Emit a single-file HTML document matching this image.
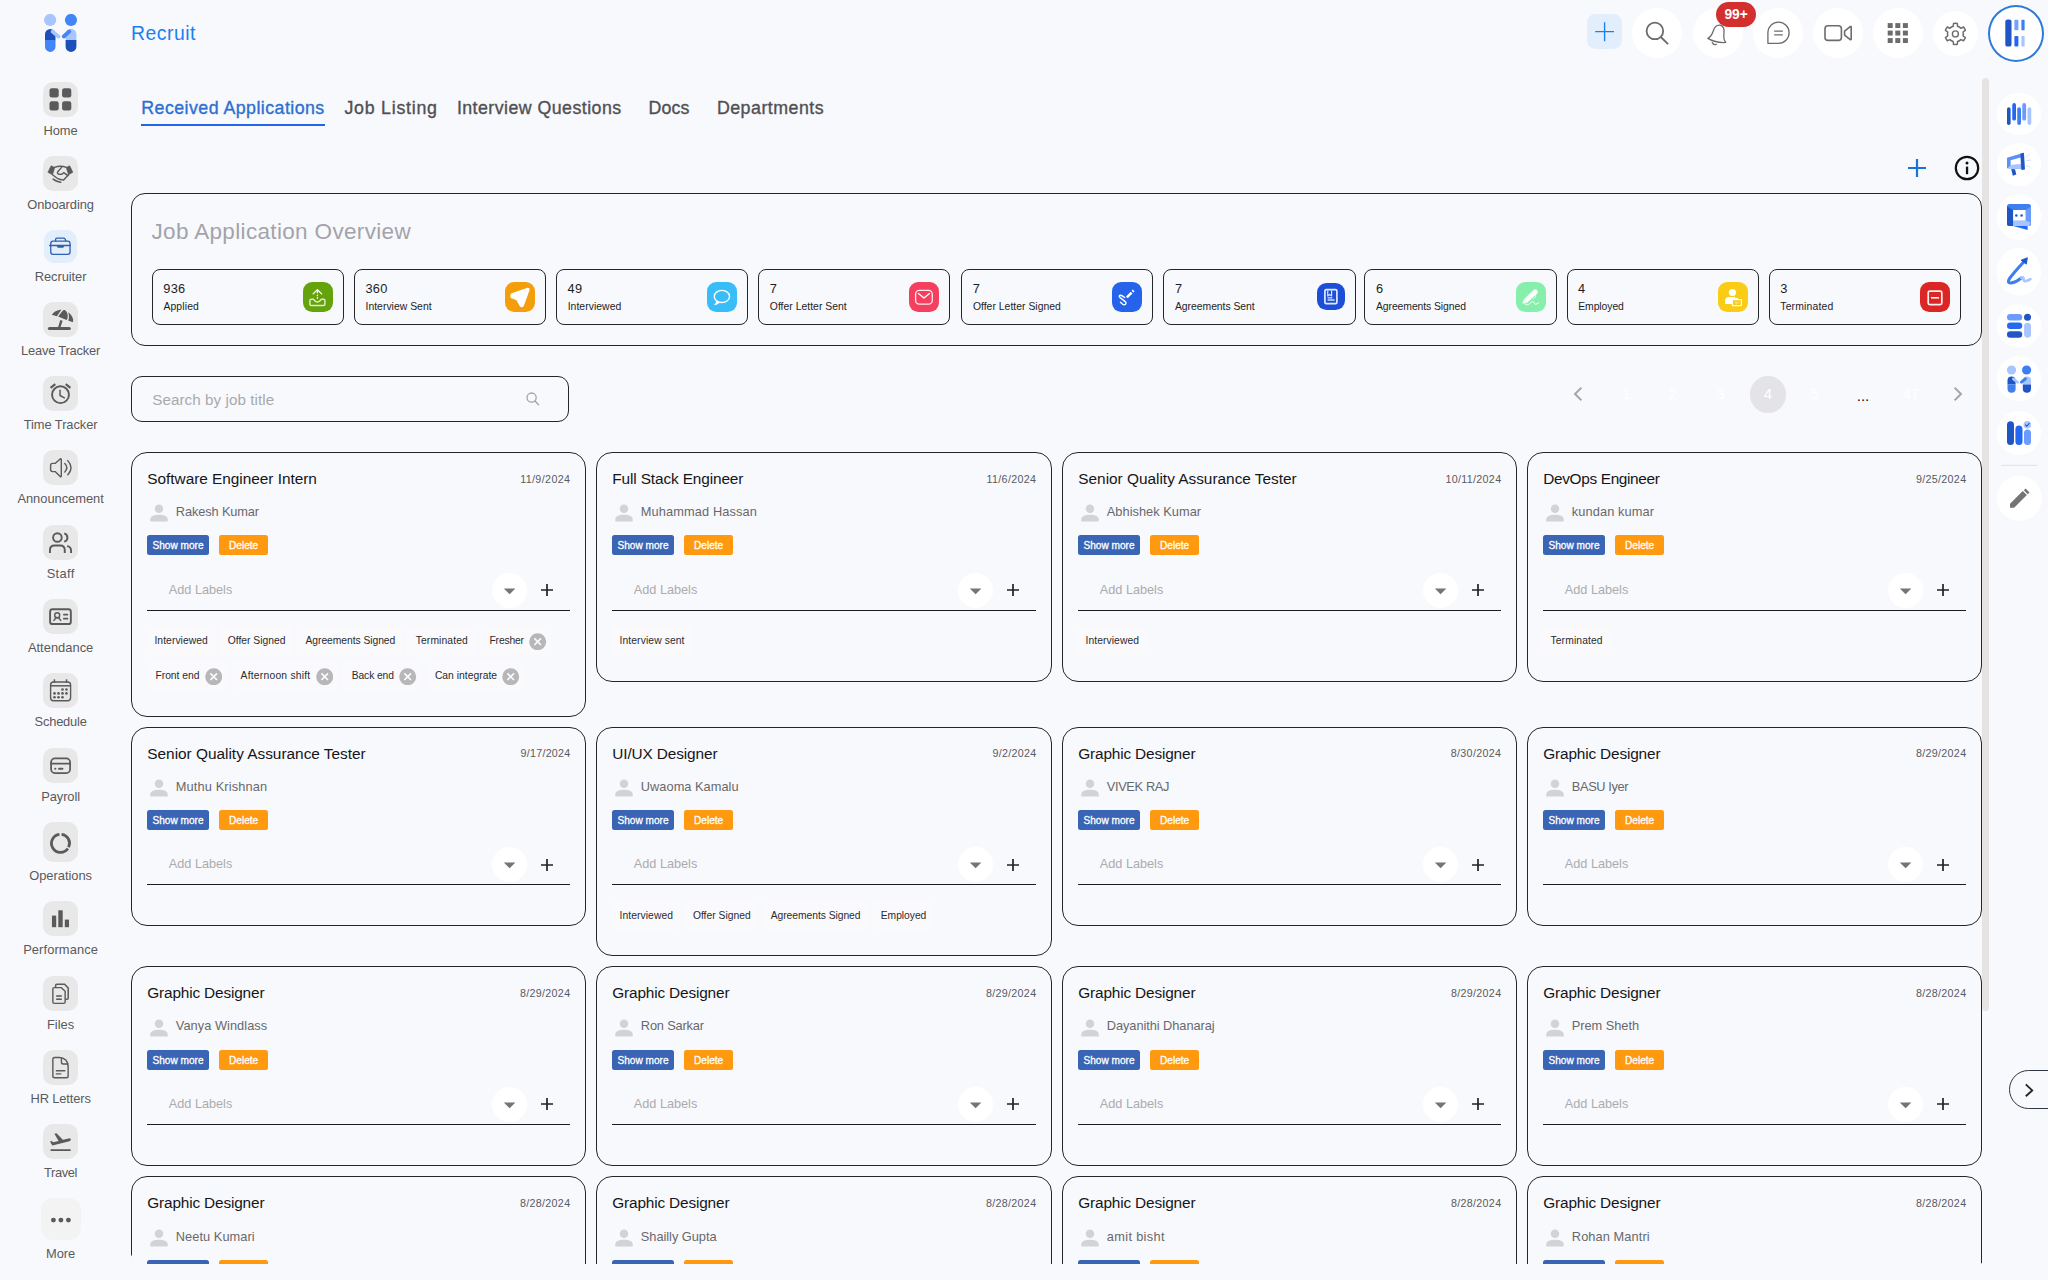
<!DOCTYPE html>
<html lang="en"><head><meta charset="utf-8"><title>Recruit</title><style>
*{box-sizing:border-box;margin:0;padding:0}
html,body{width:2048px;height:1280px;overflow:hidden;background:#f8f9fc;font-family:"Liberation Sans",Arial,sans-serif;color:#1d1d1f}
.abs{position:absolute}
div{white-space:nowrap}
#side .bx{position:absolute;left:43px;width:35px;height:35px;border-radius:10px;background:#e8e8e9}
#side .lb{position:absolute;left:0;width:121.2px;text-align:center;font-size:12.9px;color:#5a5a5d;line-height:16px}
.tab{position:absolute;top:96px;font-size:17.8px;line-height:24px;color:#505054;-webkit-text-stroke:0.35px #505054}
.tab.on{color:#2d6fd2;-webkit-text-stroke:0.35px #2d6fd2}
.circ{position:absolute;border-radius:50%;background:#fff}
.ov{position:absolute;left:131px;top:193px;width:1851px;height:152.5px;border:1px solid #26262a;border-radius:14px}
.st{position:absolute;top:269px;width:192.3px;height:55.8px;border:1px solid #26262a;border-radius:8px}
.st .n{position:absolute;left:10.6px;top:11.1px;font-size:12.8px;line-height:15px;color:#1d1d1f;letter-spacing:0.3px}
.st .l{position:absolute;left:10.7px;top:30.2px;font-size:10.4px;line-height:13px;color:#1d1d1f}
.st .ic{position:absolute;left:150.3px;top:11.8px;width:30px;height:30px;border-radius:9.2px}
.card{position:absolute;width:455px;border:1px solid #26262a;border-radius:16px}
.card .t{position:absolute;left:15.3px;top:16px;font-size:15.4px;line-height:20px;color:#151518}
.card .d{position:absolute;right:14.6px;top:19.9px;font-size:10.7px;line-height:13px;color:#5a5a5e}
.card .av{position:absolute;left:17.4px;top:50px;width:20px;height:20px}
.card .nm{position:absolute;left:43.8px;top:50.5px;font-size:12.8px;line-height:16px;color:#68686c}
.card .b1{position:absolute;left:15px;top:82px;width:62px;height:20px;border-radius:2.5px;background:#3a64b4;color:#fff;font-size:10.1px;line-height:21.6px;text-align:center;-webkit-text-stroke:0.3px #fff}
.card .b2{position:absolute;left:87px;top:82px;width:49.2px;height:20px;border-radius:2.5px;background:#ff990f;color:#fff;font-size:10.1px;line-height:21.6px;text-align:center;-webkit-text-stroke:0.3px #fff}
.card .al{position:absolute;left:36.8px;top:128.5px;font-size:12.7px;line-height:16px;color:#ababaf}
.card .dd{position:absolute;right:58px;top:120px;width:35px;height:35px;border-radius:50%;background:#fff}
.card .pl{position:absolute;right:31.3px;top:130px;width:14px;height:14px}
.card .ul{position:absolute;left:15px;right:15px;top:157px;height:1.2px;background:#1d1d1f}
.chip{position:absolute;height:29px;border-radius:3px;background:#fafafd;font-size:10.3px;line-height:30px;color:#2a2a2e;padding-left:8.4px}
.chip .x{position:absolute;right:4.2px;top:6.3px;width:17.4px;height:17.4px}
.pg{position:absolute;top:382px;width:40px;text-align:center;font-size:15px;line-height:24px;color:#fff}
</style></head><body>
<div id="side">
<div class="abs" style="left:44px;top:14px;width:34px;height:40px"><svg width="34" height="40" viewBox="0 0 34 40" style="position:absolute;left:0;top:0;">
<circle cx="6.15" cy="6" r="6.1" fill="#a9c5ff"/>
<circle cx="26.95" cy="6" r="6.1" fill="#4285f8"/>
<path d="M1 26.3 V20.2 A5.25 5.25 0 0 1 11.5 20.2 V26.3 Z" fill="#1d4fb8"/>
<path d="M1 26.1 H11.5 V32.65 A5.25 5.25 0 0 1 1 32.65 Z" fill="#4285f8"/>
<path d="M21.6 26.3 V20.2 A5.4 5.4 0 0 1 32.4 20.2 V26.3 Z" fill="#a9c5ff"/>
<path d="M21.6 26.1 H32.4 V32.5 A5.4 5.4 0 0 1 21.6 32.5 Z" fill="#1d4fb8"/>
<path d="M8.6 17.6 L14.6 22.6" stroke="#a9c5ff" stroke-width="3.8" stroke-linecap="round"/>
<path d="M25.2 17.6 L19.8 22.4" stroke="#4285f8" stroke-width="4" stroke-linecap="round"/>
</svg></div>
<div class="bx" style="top:82px;height:35px"><svg width="35" height="35" viewBox="0 0 35 35" style="position:absolute;left:0;top:0;"><g fill="#5a5a5a"><rect x="6.5" y="6.3" width="9.2" height="9.3" rx="2.3"/><rect x="19.1" y="6.3" width="9.2" height="9.3" rx="2.3"/><rect x="6.5" y="19.2" width="9.2" height="9.3" rx="2.3"/><rect x="19.1" y="19.2" width="9.2" height="9.3" rx="2.3"/></g></svg></div>
<div class="lb" style="top:123px;letter-spacing:-0.08px">Home</div>
<div class="bx" style="top:156px;height:35px"><svg width="35" height="35" viewBox="0 0 35 35" style="position:absolute;left:0;top:0;"><g fill="#5a5a5a" stroke="#5a5a5a" stroke-width="0.6" stroke-linejoin="round">
<path d="M4.9 16.3 L8.1 9.8 L11.8 11.4 L9.5 18.8 Z"/>
<path d="M29.9 16.3 L26.7 9.8 L23.2 11.4 L25.5 18.8 Z"/></g>
<g fill="none" stroke="#5a5a5a" stroke-width="1.4" stroke-linecap="round" stroke-linejoin="round">
<path d="M11.6 11.4 Q17.4 9.2 23.4 11.4"/>
<path d="M18.6 11.4 L14.7 15.8 Q13.8 17.2 15.4 18 Q17.6 19 19.6 17.6 L20.7 16.7 L24.9 19.6"/>
<path d="M9.5 18.8 L14.2 22.3 Q17.4 23.6 20.6 24.1 L25.5 18.8"/>
<path d="M10.2 23.2 Q12.4 25.2 17.6 26.3" stroke-width="1.6"/>
</g></svg></div>
<div class="lb" style="top:197px;letter-spacing:-0.08px">Onboarding</div>
<div class="bx" style="top:230px;height:33px;left:44px;width:33px;background:#e3eefc"><svg width="33" height="33" viewBox="0 0 33 33" style="position:absolute;left:0;top:0;"><g fill="none" stroke="#2f5fb0" stroke-width="1.3" stroke-linejoin="round" stroke-linecap="round">
<rect x="6.75" y="11.1" width="19.3" height="13.2" rx="2.3"/>
<path d="M11.6 10.9 V9.6 Q11.6 8.1 13.1 8.1 H19.6 Q20.6 8.1 21.2 9.2 L21.9 10.9"/>
<path d="M5.6 15.5 H26.4"/>
</g><path d="M12.6 15.5 H20.4 L19.6 17.2 Q19.4 17.8 18.6 17.8 H14.4 Q13.6 17.8 13.4 17.2 Z" fill="#2f5fb0"/></svg></div>
<div class="lb" style="top:269px;letter-spacing:-0.08px">Recruiter</div>
<div class="bx" style="top:302px;height:35px"><svg width="35" height="35" viewBox="0 0 35 35" style="position:absolute;left:0;top:0;"><g fill="#5a5a5a">
<path d="M8.8 12.65 Q10.4 10.4 12.5 9.3 Q15.2 7.8 18.45 7.4 L13.9 14.2 Z"/>
<path d="M15.1 14.6 L19.9 8.4 Q20.8 7.9 21.6 8.1 Q22.9 8.7 23.7 10 Q25 12.2 24.8 14.9 Q24.5 16.8 23.55 18.1 Z"/>
<path d="M25.1 10.2 Q26.8 11.2 27.9 12.8 Q29.4 14.6 30.05 17 Q30.3 18.6 29.9 20.2 L25.1 18.45 Q26 17 26 14.9 Q26 12.2 25.1 10.2 Z"/>
</g>
<path d="M18.45 18.3 L16.2 25.5" stroke="#5a5a5a" stroke-width="2.4"/>
<path d="M6.4 26.6 H26.3" stroke="#5a5a5a" stroke-width="3" stroke-linecap="round"/></svg></div>
<div class="lb" style="top:343px;letter-spacing:-0.21px">Leave Tracker</div>
<div class="bx" style="top:376px;height:35px"><svg width="35" height="35" viewBox="0 0 35 35" style="position:absolute;left:0;top:0;"><g fill="none" stroke="#5a5a5a" stroke-linejoin="round">
<circle cx="17.5" cy="18.7" r="8.45" stroke-width="1.9"/>
<path d="M17.05 13.7 V19.5 L21.8 22.1" stroke-width="1.5"/>
<path d="M7.55 11.8 L12.3 8.1" stroke-width="2.1"/>
<path d="M27.4 11.8 L22.7 8.1" stroke-width="2.1"/>
</g></svg></div>
<div class="lb" style="top:417px;letter-spacing:-0.09px">Time Tracker</div>
<div class="bx" style="top:450px;height:35px"><svg width="35" height="35" viewBox="0 0 35 35" style="position:absolute;left:0;top:0;"><g fill="none" stroke="#5a5a5a" stroke-width="1.4" stroke-linecap="round" stroke-linejoin="round">
<path d="M9.6 13.4 H12.1 L17.2 8.9 Q18.3 8.3 18.3 9.6 V25.9 Q18.3 27.2 17.2 26.6 L12.1 21.6 H9.6 Q7.6 21.6 7.6 19.6 V15.4 Q7.6 13.4 9.6 13.4 Z"/>
<path d="M21.8 13.6 Q25.8 17.6 21.8 21.9"/>
<path d="M24.8 10.6 Q31.2 17.6 24.8 24.7"/>
</g></svg></div>
<div class="lb" style="top:491px;letter-spacing:-0.03px">Announcement</div>
<div class="bx" style="top:525px;height:35px"><svg width="35" height="35" viewBox="0 0 35 35" style="position:absolute;left:0;top:0;"><g fill="none" stroke="#5a5a5a" stroke-width="1.9" stroke-linecap="butt" stroke-linejoin="round">
<circle cx="14.4" cy="12.5" r="4.3"/>
<path d="M6.95 28.1 V25 Q6.95 20.45 11.5 20.45 H17.2 Q21.75 20.45 21.75 25 V28.1"/>
<path d="M21.2 8.3 A4.35 4.35 0 0 1 21.2 16.7"/>
<path d="M24.1 21.1 Q28.05 21.6 28.05 25.6 V28.1"/>
</g></svg></div>
<div class="lb" style="top:566px;letter-spacing:0.33px">Staff</div>
<div class="bx" style="top:599px;height:35px"><svg width="35" height="35" viewBox="0 0 35 35" style="position:absolute;left:0;top:0;"><g fill="none" stroke="#5a5a5a" stroke-linecap="round" stroke-linejoin="round">
<rect x="7.1" y="10.3" width="20.75" height="14.75" rx="2.4" stroke-width="1.9"/>
<circle cx="14.2" cy="16.3" r="2.5" stroke-width="1.4"/>
<path d="M10.9 21.4 L13 18.7 H15.6 L17.75 21.4" stroke-width="1.5"/>
<path d="M20.9 15.6 H24.4" stroke-width="1.8"/><path d="M20.9 19.7 H24.4" stroke-width="1.8"/>
</g></svg></div>
<div class="lb" style="top:640px;letter-spacing:0.02px">Attendance</div>
<div class="bx" style="top:673px;height:35px"><svg width="35" height="35" viewBox="0 0 35 35" style="position:absolute;left:0;top:0;"><g fill="none" stroke="#5a5a5a" stroke-width="1.4" stroke-linejoin="round">
<rect x="7.6" y="9" width="20" height="18.8" rx="3"/>
<path d="M7.6 12.8 H27.6" stroke-width="1.5"/>
<path d="M11.4 6.3 V9.7" stroke-width="1.5"/><path d="M23.55 6.3 V9.7" stroke-width="1.5"/>
</g><circle cx="19.5" cy="16.5" r="1.3" fill="#5a5a5a"/><circle cx="23.45" cy="16.5" r="1.3" fill="#5a5a5a"/><circle cx="11.5" cy="20.4" r="1.3" fill="#5a5a5a"/><circle cx="15.5" cy="20.4" r="1.3" fill="#5a5a5a"/><circle cx="19.5" cy="20.4" r="1.3" fill="#5a5a5a"/><circle cx="23.45" cy="20.4" r="1.3" fill="#5a5a5a"/><circle cx="11.5" cy="24.25" r="1.3" fill="#5a5a5a"/><circle cx="15.5" cy="24.25" r="1.3" fill="#5a5a5a"/><circle cx="19.5" cy="24.25" r="1.3" fill="#5a5a5a"/></svg></div>
<div class="lb" style="top:714px;letter-spacing:-0.20px">Schedule</div>
<div class="bx" style="top:748px;height:35px"><svg width="35" height="35" viewBox="0 0 35 35" style="position:absolute;left:0;top:0;"><g fill="none" stroke="#5a5a5a" stroke-linecap="round" stroke-linejoin="round">
<rect x="8.1" y="10.4" width="19" height="14.7" rx="3.8" stroke-width="1.75"/>
<path d="M8.1 15.65 H27.1" stroke-width="1.9"/>
<path d="M12.3 20.75 H12.35" stroke-width="2.1"/><path d="M16 20.75 H19.5" stroke-width="1.9"/>
</g></svg></div>
<div class="lb" style="top:789px;letter-spacing:-0.09px">Payroll</div>
<div class="bx" style="top:822px;height:40px"><svg width="35" height="40" viewBox="0 0 35 40" style="position:absolute;left:0;top:0;"><g fill="none" stroke="#5a5a5a" stroke-width="2.8"><path d="M18.60 12.37 A9 9 0 0 1 25.59 25.25"/><path d="M24.87 26.46 A9 9 0 1 1 16.40 12.37"/></g></svg></div>
<div class="lb" style="top:868px;letter-spacing:-0.03px">Operations</div>
<div class="bx" style="top:901px;height:35px"><svg width="35" height="35" viewBox="0 0 35 35" style="position:absolute;left:0;top:0;"><g fill="#5a5a5a"><rect x="8.95" y="14.6" width="4.25" height="11.6"/><rect x="15.3" y="9.3" width="4.4" height="16.9"/><rect x="21.8" y="18.6" width="4.2" height="7.6"/></g></svg></div>
<div class="lb" style="top:942px;letter-spacing:0.10px">Performance</div>
<div class="bx" style="top:976px;height:35px"><svg width="35" height="35" viewBox="0 0 35 35" style="position:absolute;left:0;top:0;"><g fill="none" stroke="#5a5a5a" stroke-width="1.4" stroke-linejoin="round">
<path d="M9.85 13 Q9.85 11.6 11.2 11.6 H18.1 L22.15 15.3 V26 Q22.15 27.4 20.8 27.4 H11.2 Q9.85 27.4 9.85 26 Z"/>
<path d="M12.6 11.4 V9.6 Q12.6 8.3 13.9 8.3 H21.6 L25.2 12.1 V22 Q25.2 23.3 23.9 23.3 H22.4" stroke-width="1.5"/>
<path d="M13.2 20 H18.8" stroke-width="1.6"/><path d="M13.2 23.2 H18.8" stroke-width="1.6"/>
</g></svg></div>
<div class="lb" style="top:1017px;letter-spacing:0.04px">Files</div>
<div class="bx" style="top:1050px;height:35px"><svg width="35" height="35" viewBox="0 0 35 35" style="position:absolute;left:0;top:0;"><g fill="none" stroke="#5a5a5a" stroke-width="1.4" stroke-linecap="round" stroke-linejoin="round">
<path d="M9.85 9.4 Q9.85 7.55 11.7 7.55 H16.6 Q25.15 8.2 25.15 17 V26 Q25.15 27.8 23.3 27.8 H11.7 Q9.85 27.8 9.85 26 Z"/>
<path d="M18.45 8.3 V12.2 Q18.45 14 20.3 14 H24.4"/>
<path d="M13.35 20.75 H21.8"/><path d="M13.35 23.9 H17.75"/>
</g></svg></div>
<div class="lb" style="top:1091px;letter-spacing:-0.14px">HR Letters</div>
<div class="bx" style="top:1124px;height:35px"><svg width="35" height="35" viewBox="0 0 35 35" style="position:absolute;left:0;top:0;"><path d="M7 17.6 L8.6 16.9 L10.2 18.3 L15.6 17.05 L11.4 9.7 L13.5 9.3 L19.85 15.8 L25.8 14.4 Q27.4 14.2 27.8 15.1 Q28.1 16 27.4 16.6 L26.5 17.2 L9.3 21.4 Z" fill="#5a5a5a"/>
<path d="M8.3 26.1 H26.9" stroke="#5a5a5a" stroke-width="1.95" stroke-linecap="round"/></svg></div>
<div class="lb" style="top:1165px;letter-spacing:-0.39px">Travel</div>
<div class="bx" style="top:1198px;left:41px;width:40px;height:42px;border-radius:12px;background:#f3f3f3"><svg width="40" height="42" viewBox="0 0 40 42" style="position:absolute;left:0;top:0;"><g fill="#5a5a5a"><circle cx="12.4" cy="22.1" r="2.45"/><circle cx="19.9" cy="22.1" r="2.45"/><circle cx="27.4" cy="22.1" r="2.45"/></g></svg></div>
<div class="lb" style="top:1246px;letter-spacing:-0.03px">More</div>
</div>
<div class="abs" style="left:131px;top:20px;font-size:19.4px;line-height:26px;color:#1a80f0;letter-spacing:0.50px">Recruit</div>
<div class="abs" style="left:1587px;top:13.8px;width:35.1px;height:35.2px;border-radius:8.5px;background:#e3eefc"><svg width="35" height="35" viewBox="0 0 35 35" style="position:absolute;left:0;top:0;"><path d="M17.6 8.2 V27.2 M8.2 17.6 H27" stroke="#1a7ff0" stroke-width="1.35" fill="none"/></svg></div>
<div class="circ" style="left:1632.1px;top:7.9px;width:49.8px;height:49.8px"><svg width="50" height="50" viewBox="0 0 50 50" style="position:absolute;left:0;top:0;"><g fill="none" stroke="#6c6c6c" stroke-width="1.8" stroke-linecap="round"><circle cx="22.9" cy="22.9" r="8.3"/><path d="M29 29.2 L35.6 35.6" stroke-width="1.9"/></g></svg></div>
<div class="circ" style="left:1692.8px;top:7.9px;width:49.8px;height:49.8px"><svg width="50" height="50" viewBox="0 0 50 50" style="position:absolute;left:0;top:0;"><g transform="rotate(13 25.5 25.5)" fill="none" stroke="#6c6c6c" stroke-width="1.3" stroke-linecap="round" stroke-linejoin="round">
<path d="M16.2 32.6 Q19.2 30.4 19.8 24.2 Q20.4 17.4 25.2 17 Q30.2 17.2 30.8 24.2 Q31.4 30.4 34.6 32.6 Q25.4 35.4 16.2 32.6 Z"/>
<path d="M21.4 35.6 Q23 38 25.8 36.6"/>
</g></svg></div>
<div class="circ" style="left:1753.3px;top:7.9px;width:49.8px;height:49.8px"><svg width="50" height="50" viewBox="0 0 50 50" style="position:absolute;left:0;top:0;"><g fill="none" stroke="#6c6c6c" stroke-width="1.3" stroke-linecap="round" stroke-linejoin="round">
<path d="M14.9 35.3 V24.6 A10.6 10.6 0 1 1 25.5 35.3 Z"/>
<path d="M21.6 23.05 H29.4"/><path d="M21.6 26.8 H29.4"/>
</g></svg></div>
<div class="circ" style="left:1813.3px;top:7.9px;width:49.8px;height:49.8px"><svg width="50" height="50" viewBox="0 0 50 50" style="position:absolute;left:0;top:0;"><g fill="none" stroke="#6c6c6c" stroke-width="1.6" stroke-linecap="round" stroke-linejoin="round">
<rect x="12" y="17.8" width="16.4" height="14.6" rx="3"/>
<path d="M31.6 23.2 L37.2 18.6 Q38.2 18.2 38.2 19.2 V31 Q38.2 32 37.2 31.6 L31.6 27.2 Z"/>
</g></svg></div>
<div class="circ" style="left:1873.4px;top:7.9px;width:49.8px;height:49.8px"><svg width="50" height="50" viewBox="0 0 50 50" style="position:absolute;left:0;top:0;"><g fill="#6c6c6c"><rect x="14.7" y="15.1" width="5" height="4.9"/><rect x="14.7" y="22.6" width="5" height="4.9"/><rect x="14.7" y="30.1" width="5" height="4.9"/><rect x="22.299999999999997" y="15.1" width="5" height="4.9"/><rect x="22.299999999999997" y="22.6" width="5" height="4.9"/><rect x="22.299999999999997" y="30.1" width="5" height="4.9"/><rect x="29.9" y="15.1" width="5" height="4.9"/><rect x="29.9" y="22.6" width="5" height="4.9"/><rect x="29.9" y="30.1" width="5" height="4.9"/></g></svg></div>
<div class="circ" style="left:1933.3px;top:10.6px;width:44.6px;height:45px"><svg width="45" height="45" viewBox="0 0 45 45" style="position:absolute;left:0;top:0;"><g fill="none" stroke="#6c6c6c" stroke-width="1.5" stroke-linejoin="round"><path d="M20.20 15.31 L20.52 12.47 A10.6 10.6 0 0 1 24.28 12.47 L24.60 15.31 A7.9 7.9 0 0 1 27.87 17.20 L30.50 16.06 A10.6 10.6 0 0 1 32.37 19.31 L30.07 21.02 A7.9 7.9 0 0 1 30.07 24.78 L32.37 26.49 A10.6 10.6 0 0 1 30.50 29.74 L27.87 28.60 A7.9 7.9 0 0 1 24.60 30.49 L24.28 33.33 A10.6 10.6 0 0 1 20.52 33.33 L20.20 30.49 A7.9 7.9 0 0 1 16.93 28.60 L14.30 29.74 A10.6 10.6 0 0 1 12.43 26.49 L14.73 24.78 A7.9 7.9 0 0 1 14.73 21.02 L12.43 19.31 A10.6 10.6 0 0 1 14.30 16.06 L16.93 17.20 A7.9 7.9 0 0 1 20.20 15.31 Z"/><circle cx="22.4" cy="22.9" r="3" stroke-width="1.4"/></g></svg></div>
<div class="abs" style="left:1715.8px;top:2.4px;width:40.5px;height:24.8px;border-radius:12.4px;background:#d32f2f;color:#fff;font-size:13.8px;font-weight:bold;line-height:25px;text-align:center;letter-spacing:-0.1px">99+</div>
<div class="abs" style="left:1988.2px;top:5px;width:56px;height:56.5px;border-radius:50%;border:2px solid #2d7bd8;background:#fff"><svg width="53" height="53" viewBox="0 0 53 53" style="position:absolute;left:0;top:0;"><rect x="15.3" y="12.4" width="6.2" height="27.2" rx="2.2" fill="#1f55c4"/>
<rect x="24.4" y="12.8" width="4" height="10.5" rx="1" fill="#74a1ff"/>
<rect x="31.4" y="12.8" width="3.2" height="10.5" rx="0.6" fill="#3d7ff0"/>
<rect x="24.4" y="28.9" width="4" height="10.7" rx="1" fill="#2468f2"/>
<rect x="31.4" y="28.9" width="3.2" height="10.7" rx="0.6" fill="#a9c5ff"/></svg></div>
<div class="tab on" style="left:141.3px;letter-spacing:0.45px">Received Applications</div>
<div class="tab" style="left:344.4px;letter-spacing:0.76px">Job Listing</div>
<div class="tab" style="left:456.9px;letter-spacing:0.45px">Interview Questions</div>
<div class="tab" style="left:648.6px;letter-spacing:0.10px">Docs</div>
<div class="tab" style="left:716.9px;letter-spacing:0.50px">Departments</div>
<div class="abs" style="left:141px;top:124px;width:184px;height:2px;background:#2563eb"></div>
<div class="abs" style="left:1907px;top:158px;width:20px;height:20px"><svg width="20" height="20" viewBox="0 0 20 20" style="position:absolute;left:0;top:0;"><path d="M10 1 V19 M1 10 H19" stroke="#1a73d9" stroke-width="2.2" fill="none"/></svg></div>
<div class="abs" style="left:1954px;top:155px;width:26px;height:26px"><svg width="26" height="26" viewBox="0 0 26 26" style="position:absolute;left:0;top:0;"><circle cx="13" cy="13" r="11.2" fill="none" stroke="#111" stroke-width="2.2"/><rect x="11.9" y="11.6" width="2.3" height="7.6" fill="#111"/><circle cx="13" cy="8" r="1.5" fill="#111"/></svg></div>
<div class="ov"></div>
<div class="abs" style="left:151.5px;top:216.5px;font-size:22.5px;line-height:30px;color:#a3a3ab;letter-spacing:0.34px">Job Application Overview</div>
<div class="st" style="left:151.7px"><div class="n">936</div><div class="l" style="letter-spacing:0.13px">Applied</div><div class="ic" style="background:#65a30d"><svg width="30" height="30" viewBox="0 0 30 30" style="position:absolute;left:0;top:0;"><g fill="none" stroke="#fff" stroke-linecap="round" stroke-linejoin="round"><path d="M8.2 17.3 H10.4 Q12.6 20.1 14.4 20.1 Q16.2 20.1 18.4 17.3 H20.6 Q21.9 17.3 21.9 18.6 V22.2 Q21.9 23.5 20.6 23.5 H8.2 Q6.9 23.5 6.9 22.2 V18.6 Q6.9 17.3 8.2 17.3 Z" stroke-width="1.5" stroke-opacity="0.78"/><path d="M10.1 11.9 L14.4 7.7 L18.7 11.9" stroke-width="1.3"/><path d="M14.4 8.6 V10.8 M14.4 13.1 V13.7 M14.4 15.6 V16.2" stroke-width="1.3"/></g></svg></div></div>
<div class="st" style="left:353.8px"><div class="n">360</div><div class="l" style="letter-spacing:0.02px">Interview Sent</div><div class="ic" style="background:#f59e0b"><svg width="30" height="30" viewBox="0 0 30 30" style="position:absolute;left:0;top:0;"><path d="M22.6 5.7 Q24.9 5.6 24.6 8 L18.8 23.9 Q17 26.2 14.9 24.4 L11.9 18.9 Q11.5 18.3 10.9 18 L5.9 15.9 Q4.2 13.6 6.5 11.3 Z" fill="#fff"/></svg></div></div>
<div class="st" style="left:556.0px"><div class="n">49</div><div class="l" style="letter-spacing:0.04px">Interviewed</div><div class="ic" style="background:#38bdf8"><svg width="30" height="30" viewBox="0 0 30 30" style="position:absolute;left:0;top:0;"><ellipse cx="14.9" cy="14.45" rx="7.65" ry="6.1" fill="none" stroke="#fff" stroke-width="1.45"/><path d="M9.2 18.6 Q9.2 21.4 6.9 23.2 Q10.4 22.9 13 20.4 Z" fill="#fff"/></svg></div></div>
<div class="st" style="left:758.1px"><div class="n">7</div><div class="l" style="letter-spacing:0.02px">Offer Letter Sent</div><div class="ic" style="background:#f43f5e"><svg width="30" height="30" viewBox="0 0 30 30" style="position:absolute;left:0;top:0;"><g fill="none" stroke="#fff" stroke-linejoin="round" stroke-linecap="round"><rect x="6.6" y="8.45" width="16.65" height="13.7" rx="3.7" stroke-width="1.3" stroke-opacity="0.9"/><path d="M9.4 11.55 L14.9 15.95 L20.5 11.55" stroke-width="1.4"/></g></svg></div></div>
<div class="st" style="left:961.2px"><div class="n">7</div><div class="l" style="letter-spacing:0.02px">Offer Letter Signed</div><div class="ic" style="background:#2563eb"><svg width="30" height="30" viewBox="0 0 30 30" style="position:absolute;left:0;top:0;"><g fill="none" stroke="#fff" stroke-linecap="round" stroke-linejoin="round"><path d="M12.7 15.5 Q8.6 12.4 7.5 13.6 Q6.6 14.8 9.4 16.6 L13.2 19.6 Q14.6 21 13.6 22.2 Q12.2 23.4 10.4 22 L8.5 20.3" stroke-width="1.45"/><path d="M14.9 15.3 L19.6 10.6" stroke-width="2.5" stroke-linecap="butt"/><path d="M20.5 9.7 L21.7 8.5" stroke-width="2.5" stroke-linecap="butt"/></g></svg></div></div>
<div class="st" style="left:1163.3px"><div class="n">7</div><div class="l" style="letter-spacing:-0.04px">Agreements Sent</div><div class="ic" style="background:#1d4ed8;width:28px;height:27.2px;left:152.4px;top:13px;border-radius:9.5px"><svg width="28" height="27.2" viewBox="0 0 28 27.2" style="position:absolute;left:0;top:0;"><g fill="none" stroke="#fff" stroke-linejoin="round"><rect x="7.9" y="6.6" width="12" height="14.1" rx="1.4" stroke-width="1.7" stroke-opacity="0.88"/><path d="M10.7 7.4 V12.9 L12.65 11.5 L14.6 12.9 V7.4" stroke-width="1.2" stroke-opacity="0.85"/><path d="M10.6 14.85 H15.4" stroke-width="1.3" stroke-opacity="0.8"/><path d="M10.6 17 H17.6" stroke-width="1.5" stroke-opacity="0.8"/></g></svg></div></div>
<div class="st" style="left:1364.3px"><div class="n">6</div><div class="l" style="letter-spacing:-0.08px">Agreements Signed</div><div class="ic" style="background:#86efac"><svg width="30" height="30" viewBox="0 0 30 30" style="position:absolute;left:0;top:0;"><g stroke="#fff" stroke-linecap="round" stroke-linejoin="round"><path d="M6.9 20.9 L8.1 17.4 L17.6 8.2 Q19.4 6.9 21 8.4 Q22.2 10 20.9 11.6 L11 20.6 Z" fill="#fff" stroke-width="0.6"/><path d="M19.3 13.2 Q20.3 14.2 19.2 15.4 L17.6 16.8" fill="none" stroke-width="0.9" stroke-opacity="0.8"/><path d="M9 22.2 Q10.6 23.3 12.2 22.6 Q13.6 22 15.2 20.3 Q16.8 18.8 17.8 20 Q18.4 21.2 18.8 22 Q19.6 22.8 21 21.8 L22.8 20.5" fill="none" stroke-width="1" stroke-opacity="0.9"/></g></svg></div></div>
<div class="st" style="left:1566.5px"><div class="n">4</div><div class="l" style="letter-spacing:-0.07px">Employed</div><div class="ic" style="background:#facc15"><svg width="30" height="30" viewBox="0 0 30 30" style="position:absolute;left:0;top:0;"><circle cx="14.4" cy="10.5" r="3.6" fill="#fff"/><path d="M7 22 V18.6 Q7 15.1 11.6 15.1 H16.8 Q17.5 15.2 17.5 16 V22 Z" fill="#fff"/><rect x="14.3" y="17.6" width="9.1" height="6" rx="0.7" fill="#facc15" stroke="#fff" stroke-width="1.15"/><path d="M17.4 17.4 Q18.8 15.6 20.2 17.4" stroke="#fff" stroke-width="1.1" fill="none"/><path d="M16.8 20.8 H20.8" stroke="#fff" stroke-opacity="0.55" stroke-width="1.2"/></svg></div></div>
<div class="st" style="left:1768.6px"><div class="n">3</div><div class="l" style="letter-spacing:0.17px">Terminated</div><div class="ic" style="background:#dc2626"><svg width="30" height="30" viewBox="0 0 30 30" style="position:absolute;left:0;top:0;"><rect x="8.2" y="9.15" width="13.6" height="13.4" rx="1.6" fill="none" stroke="#fff" stroke-opacity="0.92" stroke-width="1.7"/><path d="M10.95 15.8 H19.05" stroke="#fff" stroke-width="1.5"/></svg></div></div>
<div class="abs" style="left:131px;top:376px;width:438px;height:46px;border:1px solid #26262a;border-radius:11px"></div>
<div class="abs" style="left:152.3px;top:390.5px;font-size:15.2px;line-height:18px;color:#a9a9ad;letter-spacing:0.06px">Search by job title</div>
<div class="abs" style="left:525px;top:391px;width:16px;height:16px"><svg width="16" height="16" viewBox="0 0 16 16" style="position:absolute;left:0;top:0;"><g fill="none" stroke="#a3a3a8" stroke-width="1.3" stroke-linecap="round"><circle cx="6.6" cy="6.6" r="4.6"/><path d="M10 10 L13.6 13.8"/></g></svg></div>
<div class="abs" style="left:1749.7px;top:376px;width:36.6px;height:36.6px;border-radius:50%;background:#e4e4e8"></div>
<div class="pg" style="left:1606px">1</div>
<div class="pg" style="left:1653px">2</div>
<div class="pg" style="left:1701px">3</div>
<div class="pg" style="left:1748px">4</div>
<div class="pg" style="left:1795px">5</div>
<div class="pg" style="left:1891px">47</div>
<div class="pg" style="left:1843px;color:#111;top:384px">...</div>
<div class="abs" style="left:1571px;top:385px;width:14px;height:18px"><svg width="14" height="18" viewBox="0 0 14 18" style="position:absolute;left:0;top:0;"><path d="M10.4 2.6 L4 9 L10.4 15.4" fill="none" stroke="#a4a4a4" stroke-width="2"/></svg></div>
<div class="abs" style="left:1951px;top:385px;width:14px;height:18px"><svg width="14" height="18" viewBox="0 0 14 18" style="position:absolute;left:0;top:0;"><path d="M3.6 2.6 L10 9 L3.6 15.4" fill="none" stroke="#a4a4a4" stroke-width="2"/></svg></div>
<div class="abs" id="scroll" style="left:130px;top:440px;width:1859px;height:824px;overflow:hidden;border-radius:0 0 12px 15px">
<div class="card" style="left:1.0px;top:12.0px;height:265.0px;width:455px">
<div class="t" style="letter-spacing:-0.03px">Software Engineer Intern</div><div class="d" style="letter-spacing:0.39px">11/9/2024</div><div class="av" style=""><svg width="20" height="20" viewBox="0 0 20 20" style="position:absolute;left:0;top:0;"><circle cx="10" cy="5.7" r="4.25" fill="#d3d3d7"/><path d="M1.3 18.4 V16.2 Q1.3 11.7 10 11.7 Q18.7 11.7 18.7 16.2 V18.4 Z" fill="#d3d3d7"/></svg></div><div class="nm" style="letter-spacing:-0.12px">Rakesh Kumar</div>
<div class="b1" style="">Show more</div><div class="b2" style="">Delete</div>
<div class="al" style="margin-top:0px">Add Labels</div><div class="dd" style="margin-top:0px"><svg width="35" height="35" viewBox="0 0 35 35" style="position:absolute;left:0;top:0;"><path d="M11.8 15.4 H23.4 L17.6 21.2 Z" fill="#757575"/></svg></div><div class="pl" style="margin-top:0px"><svg width="14" height="14" viewBox="0 0 14 14" style="position:absolute;left:0;top:0;"><path d="M7 1 V13 M1 7 H13" stroke="#222" stroke-width="1.7" fill="none"/></svg></div><div class="ul" style="margin-top:0px"></div>
<div class="chip" style="left:14.0px;top:173.4px;width:69.4px;letter-spacing:0.08px">Interviewed</div>
<div class="chip" style="left:87.3px;top:173.4px;width:73.7px;letter-spacing:0.01px">Offer Signed</div>
<div class="chip" style="left:165.1px;top:173.4px;width:105.8px;letter-spacing:-0.04px">Agreements Signed</div>
<div class="chip" style="left:275.3px;top:173.4px;width:68.1px;letter-spacing:0.13px">Terminated</div>
<div class="chip" style="left:349.1px;top:173.4px;width:69.8px;letter-spacing:-0.16px">Fresher<span class="x"><svg width="17.4" height="17.4" viewBox="0 0 17.4 17.4" style="position:absolute;left:0;top:0;"><circle cx="8.7" cy="8.7" r="8.5" fill="#b7b7ba"/><path d="M5.4 5.4 L12 12 M12 5.4 L5.4 12" stroke="#fafafc" stroke-width="1.7"/></svg></span></div>
<div class="chip" style="left:15.1px;top:208.3px;width:79.2px;letter-spacing:-0.02px">Front end<span class="x"><svg width="17.4" height="17.4" viewBox="0 0 17.4 17.4" style="position:absolute;left:0;top:0;"><circle cx="8.7" cy="8.7" r="8.5" fill="#b7b7ba"/><path d="M5.4 5.4 L12 12 M12 5.4 L5.4 12" stroke="#fafafc" stroke-width="1.7"/></svg></span></div>
<div class="chip" style="left:100.2px;top:208.3px;width:104.9px;letter-spacing:0.23px">Afternoon shift<span class="x"><svg width="17.4" height="17.4" viewBox="0 0 17.4 17.4" style="position:absolute;left:0;top:0;"><circle cx="8.7" cy="8.7" r="8.5" fill="#b7b7ba"/><path d="M5.4 5.4 L12 12 M12 5.4 L5.4 12" stroke="#fafafc" stroke-width="1.7"/></svg></span></div>
<div class="chip" style="left:211.3px;top:208.3px;width:77.5px;letter-spacing:-0.10px">Back end<span class="x"><svg width="17.4" height="17.4" viewBox="0 0 17.4 17.4" style="position:absolute;left:0;top:0;"><circle cx="8.7" cy="8.7" r="8.5" fill="#b7b7ba"/><path d="M5.4 5.4 L12 12 M12 5.4 L5.4 12" stroke="#fafafc" stroke-width="1.7"/></svg></span></div>
<div class="chip" style="left:294.5px;top:208.3px;width:97.4px;letter-spacing:0.03px">Can integrate<span class="x"><svg width="17.4" height="17.4" viewBox="0 0 17.4 17.4" style="position:absolute;left:0;top:0;"><circle cx="8.7" cy="8.7" r="8.5" fill="#b7b7ba"/><path d="M5.4 5.4 L12 12 M12 5.4 L5.4 12" stroke="#fafafc" stroke-width="1.7"/></svg></span></div>
</div>
<div class="card" style="left:466.0px;top:12.0px;height:229.5px;width:456px">
<div class="t" style="letter-spacing:-0.13px">Full Stack Engineer</div><div class="d" style="letter-spacing:0.35px">11/6/2024</div><div class="av" style=""><svg width="20" height="20" viewBox="0 0 20 20" style="position:absolute;left:0;top:0;"><circle cx="10" cy="5.7" r="4.25" fill="#d3d3d7"/><path d="M1.3 18.4 V16.2 Q1.3 11.7 10 11.7 Q18.7 11.7 18.7 16.2 V18.4 Z" fill="#d3d3d7"/></svg></div><div class="nm" style="letter-spacing:0.11px">Muhammad Hassan</div>
<div class="b1" style="">Show more</div><div class="b2" style="">Delete</div>
<div class="al" style="margin-top:0px">Add Labels</div><div class="dd" style="margin-top:0px"><svg width="35" height="35" viewBox="0 0 35 35" style="position:absolute;left:0;top:0;"><path d="M11.8 15.4 H23.4 L17.6 21.2 Z" fill="#757575"/></svg></div><div class="pl" style="margin-top:0px"><svg width="14" height="14" viewBox="0 0 14 14" style="position:absolute;left:0;top:0;"><path d="M7 1 V13 M1 7 H13" stroke="#222" stroke-width="1.7" fill="none"/></svg></div><div class="ul" style="margin-top:0px"></div>
<div class="chip" style="left:14.1px;top:173.4px;width:80.9px;letter-spacing:0.11px">Interview sent</div>
</div>
<div class="card" style="left:932.0px;top:12.0px;height:229.5px;width:455px">
<div class="t" style="letter-spacing:-0.01px">Senior Quality Assurance Tester</div><div class="d" style="letter-spacing:0.32px">10/11/2024</div><div class="av" style=""><svg width="20" height="20" viewBox="0 0 20 20" style="position:absolute;left:0;top:0;"><circle cx="10" cy="5.7" r="4.25" fill="#d3d3d7"/><path d="M1.3 18.4 V16.2 Q1.3 11.7 10 11.7 Q18.7 11.7 18.7 16.2 V18.4 Z" fill="#d3d3d7"/></svg></div><div class="nm" style="letter-spacing:0.03px">Abhishek Kumar</div>
<div class="b1" style="">Show more</div><div class="b2" style="">Delete</div>
<div class="al" style="margin-top:0px">Add Labels</div><div class="dd" style="margin-top:0px"><svg width="35" height="35" viewBox="0 0 35 35" style="position:absolute;left:0;top:0;"><path d="M11.8 15.4 H23.4 L17.6 21.2 Z" fill="#757575"/></svg></div><div class="pl" style="margin-top:0px"><svg width="14" height="14" viewBox="0 0 14 14" style="position:absolute;left:0;top:0;"><path d="M7 1 V13 M1 7 H13" stroke="#222" stroke-width="1.7" fill="none"/></svg></div><div class="ul" style="margin-top:0px"></div>
<div class="chip" style="left:14.1px;top:173.4px;width:69.4px;letter-spacing:0.08px">Interviewed</div>
</div>
<div class="card" style="left:1397.0px;top:12.0px;height:229.5px;width:455px">
<div class="t" style="letter-spacing:-0.35px">DevOps Engineer</div><div class="d" style="letter-spacing:0.32px">9/25/2024</div><div class="av" style=""><svg width="20" height="20" viewBox="0 0 20 20" style="position:absolute;left:0;top:0;"><circle cx="10" cy="5.7" r="4.25" fill="#d3d3d7"/><path d="M1.3 18.4 V16.2 Q1.3 11.7 10 11.7 Q18.7 11.7 18.7 16.2 V18.4 Z" fill="#d3d3d7"/></svg></div><div class="nm" style="letter-spacing:0.11px">kundan kumar</div>
<div class="b1" style="">Show more</div><div class="b2" style="">Delete</div>
<div class="al" style="margin-top:0px">Add Labels</div><div class="dd" style="margin-top:0px"><svg width="35" height="35" viewBox="0 0 35 35" style="position:absolute;left:0;top:0;"><path d="M11.8 15.4 H23.4 L17.6 21.2 Z" fill="#757575"/></svg></div><div class="pl" style="margin-top:0px"><svg width="14" height="14" viewBox="0 0 14 14" style="position:absolute;left:0;top:0;"><path d="M7 1 V13 M1 7 H13" stroke="#222" stroke-width="1.7" fill="none"/></svg></div><div class="ul" style="margin-top:0px"></div>
<div class="chip" style="left:14.1px;top:173.4px;width:68.1px;letter-spacing:0.13px">Terminated</div>
</div>
<div class="card" style="left:1.0px;top:287.0px;height:198.5px;width:455px">
<div class="t" style="letter-spacing:-0.01px">Senior Quality Assurance Tester</div><div class="d" style="margin-top:-1px;letter-spacing:0.25px">9/17/2024</div><div class="av" style=""><svg width="20" height="20" viewBox="0 0 20 20" style="position:absolute;left:0;top:0;"><circle cx="10" cy="5.7" r="4.25" fill="#d3d3d7"/><path d="M1.3 18.4 V16.2 Q1.3 11.7 10 11.7 Q18.7 11.7 18.7 16.2 V18.4 Z" fill="#d3d3d7"/></svg></div><div class="nm" style="letter-spacing:0.13px">Muthu Krishnan</div>
<div class="b1" style="">Show more</div><div class="b2" style="">Delete</div>
<div class="al" style="margin-top:-1px">Add Labels</div><div class="dd" style="margin-top:-1px"><svg width="35" height="35" viewBox="0 0 35 35" style="position:absolute;left:0;top:0;"><path d="M11.8 15.4 H23.4 L17.6 21.2 Z" fill="#757575"/></svg></div><div class="pl" style="margin-top:0px"><svg width="14" height="14" viewBox="0 0 14 14" style="position:absolute;left:0;top:0;"><path d="M7 1 V13 M1 7 H13" stroke="#222" stroke-width="1.7" fill="none"/></svg></div><div class="ul" style="margin-top:-1px"></div>
</div>
<div class="card" style="left:466.0px;top:287.0px;height:228.5px;width:456px">
<div class="t" style="letter-spacing:-0.13px">UI/UX Designer</div><div class="d" style="margin-top:-1px;letter-spacing:0.28px">9/2/2024</div><div class="av" style=""><svg width="20" height="20" viewBox="0 0 20 20" style="position:absolute;left:0;top:0;"><circle cx="10" cy="5.7" r="4.25" fill="#d3d3d7"/><path d="M1.3 18.4 V16.2 Q1.3 11.7 10 11.7 Q18.7 11.7 18.7 16.2 V18.4 Z" fill="#d3d3d7"/></svg></div><div class="nm" style="letter-spacing:0.03px">Uwaoma Kamalu</div>
<div class="b1" style="">Show more</div><div class="b2" style="">Delete</div>
<div class="al" style="margin-top:-1px">Add Labels</div><div class="dd" style="margin-top:-1px"><svg width="35" height="35" viewBox="0 0 35 35" style="position:absolute;left:0;top:0;"><path d="M11.8 15.4 H23.4 L17.6 21.2 Z" fill="#757575"/></svg></div><div class="pl" style="margin-top:0px"><svg width="14" height="14" viewBox="0 0 14 14" style="position:absolute;left:0;top:0;"><path d="M7 1 V13 M1 7 H13" stroke="#222" stroke-width="1.7" fill="none"/></svg></div><div class="ul" style="margin-top:-1px"></div>
<div class="chip" style="left:14.1px;top:172.9px;width:69.4px;letter-spacing:0.08px">Interviewed</div>
<div class="chip" style="left:87.5px;top:172.9px;width:73.7px;letter-spacing:0.01px">Offer Signed</div>
<div class="chip" style="left:165.3px;top:172.9px;width:105.8px;letter-spacing:-0.04px">Agreements Signed</div>
<div class="chip" style="left:275.4px;top:172.9px;width:61.5px;letter-spacing:-0.04px">Employed</div>
</div>
<div class="card" style="left:932.0px;top:287.0px;height:198.5px;width:455px">
<div class="t" style="letter-spacing:-0.17px">Graphic Designer</div><div class="d" style="margin-top:-1px;letter-spacing:0.35px">8/30/2024</div><div class="av" style=""><svg width="20" height="20" viewBox="0 0 20 20" style="position:absolute;left:0;top:0;"><circle cx="10" cy="5.7" r="4.25" fill="#d3d3d7"/><path d="M1.3 18.4 V16.2 Q1.3 11.7 10 11.7 Q18.7 11.7 18.7 16.2 V18.4 Z" fill="#d3d3d7"/></svg></div><div class="nm" style="letter-spacing:-0.36px">VIVEK RAJ</div>
<div class="b1" style="">Show more</div><div class="b2" style="">Delete</div>
<div class="al" style="margin-top:-1px">Add Labels</div><div class="dd" style="margin-top:-1px"><svg width="35" height="35" viewBox="0 0 35 35" style="position:absolute;left:0;top:0;"><path d="M11.8 15.4 H23.4 L17.6 21.2 Z" fill="#757575"/></svg></div><div class="pl" style="margin-top:0px"><svg width="14" height="14" viewBox="0 0 14 14" style="position:absolute;left:0;top:0;"><path d="M7 1 V13 M1 7 H13" stroke="#222" stroke-width="1.7" fill="none"/></svg></div><div class="ul" style="margin-top:-1px"></div>
</div>
<div class="card" style="left:1397.0px;top:287.0px;height:198.5px;width:455px">
<div class="t" style="letter-spacing:-0.17px">Graphic Designer</div><div class="d" style="margin-top:-1px;letter-spacing:0.32px">8/29/2024</div><div class="av" style=""><svg width="20" height="20" viewBox="0 0 20 20" style="position:absolute;left:0;top:0;"><circle cx="10" cy="5.7" r="4.25" fill="#d3d3d7"/><path d="M1.3 18.4 V16.2 Q1.3 11.7 10 11.7 Q18.7 11.7 18.7 16.2 V18.4 Z" fill="#d3d3d7"/></svg></div><div class="nm" style="letter-spacing:-0.37px">BASU Iyer</div>
<div class="b1" style="">Show more</div><div class="b2" style="">Delete</div>
<div class="al" style="margin-top:-1px">Add Labels</div><div class="dd" style="margin-top:-1px"><svg width="35" height="35" viewBox="0 0 35 35" style="position:absolute;left:0;top:0;"><path d="M11.8 15.4 H23.4 L17.6 21.2 Z" fill="#757575"/></svg></div><div class="pl" style="margin-top:0px"><svg width="14" height="14" viewBox="0 0 14 14" style="position:absolute;left:0;top:0;"><path d="M7 1 V13 M1 7 H13" stroke="#222" stroke-width="1.7" fill="none"/></svg></div><div class="ul" style="margin-top:-1px"></div>
</div>
<div class="card" style="left:1.0px;top:526.0px;height:199.7px;width:455px">
<div class="t" style="letter-spacing:-0.17px">Graphic Designer</div><div class="d" style="letter-spacing:0.32px">8/29/2024</div><div class="av" style="margin-top:0.8px"><svg width="20" height="20" viewBox="0 0 20 20" style="position:absolute;left:0;top:0;"><circle cx="10" cy="5.7" r="4.25" fill="#d3d3d7"/><path d="M1.3 18.4 V16.2 Q1.3 11.7 10 11.7 Q18.7 11.7 18.7 16.2 V18.4 Z" fill="#d3d3d7"/></svg></div><div class="nm" style="margin-top:0.8px;letter-spacing:0.04px">Vanya Windlass</div>
<div class="b1" style="margin-top:0.6px">Show more</div><div class="b2" style="margin-top:0.6px">Delete</div>
<div class="al" style="margin-top:0px">Add Labels</div><div class="dd" style="margin-top:0px"><svg width="35" height="35" viewBox="0 0 35 35" style="position:absolute;left:0;top:0;"><path d="M11.8 15.4 H23.4 L17.6 21.2 Z" fill="#757575"/></svg></div><div class="pl" style="margin-top:0px"><svg width="14" height="14" viewBox="0 0 14 14" style="position:absolute;left:0;top:0;"><path d="M7 1 V13 M1 7 H13" stroke="#222" stroke-width="1.7" fill="none"/></svg></div><div class="ul" style="margin-top:0px"></div>
</div>
<div class="card" style="left:466.0px;top:526.0px;height:199.7px;width:456px">
<div class="t" style="letter-spacing:-0.17px">Graphic Designer</div><div class="d" style="letter-spacing:0.32px">8/29/2024</div><div class="av" style="margin-top:0.8px"><svg width="20" height="20" viewBox="0 0 20 20" style="position:absolute;left:0;top:0;"><circle cx="10" cy="5.7" r="4.25" fill="#d3d3d7"/><path d="M1.3 18.4 V16.2 Q1.3 11.7 10 11.7 Q18.7 11.7 18.7 16.2 V18.4 Z" fill="#d3d3d7"/></svg></div><div class="nm" style="margin-top:0.8px;letter-spacing:-0.16px">Ron Sarkar</div>
<div class="b1" style="margin-top:0.6px">Show more</div><div class="b2" style="margin-top:0.6px">Delete</div>
<div class="al" style="margin-top:0px">Add Labels</div><div class="dd" style="margin-top:0px"><svg width="35" height="35" viewBox="0 0 35 35" style="position:absolute;left:0;top:0;"><path d="M11.8 15.4 H23.4 L17.6 21.2 Z" fill="#757575"/></svg></div><div class="pl" style="margin-top:0px"><svg width="14" height="14" viewBox="0 0 14 14" style="position:absolute;left:0;top:0;"><path d="M7 1 V13 M1 7 H13" stroke="#222" stroke-width="1.7" fill="none"/></svg></div><div class="ul" style="margin-top:0px"></div>
</div>
<div class="card" style="left:932.0px;top:526.0px;height:199.7px;width:455px">
<div class="t" style="letter-spacing:-0.17px">Graphic Designer</div><div class="d" style="letter-spacing:0.32px">8/29/2024</div><div class="av" style="margin-top:0.8px"><svg width="20" height="20" viewBox="0 0 20 20" style="position:absolute;left:0;top:0;"><circle cx="10" cy="5.7" r="4.25" fill="#d3d3d7"/><path d="M1.3 18.4 V16.2 Q1.3 11.7 10 11.7 Q18.7 11.7 18.7 16.2 V18.4 Z" fill="#d3d3d7"/></svg></div><div class="nm" style="margin-top:0.8px;letter-spacing:-0.06px">Dayanithi Dhanaraj</div>
<div class="b1" style="margin-top:0.6px">Show more</div><div class="b2" style="margin-top:0.6px">Delete</div>
<div class="al" style="margin-top:0px">Add Labels</div><div class="dd" style="margin-top:0px"><svg width="35" height="35" viewBox="0 0 35 35" style="position:absolute;left:0;top:0;"><path d="M11.8 15.4 H23.4 L17.6 21.2 Z" fill="#757575"/></svg></div><div class="pl" style="margin-top:0px"><svg width="14" height="14" viewBox="0 0 14 14" style="position:absolute;left:0;top:0;"><path d="M7 1 V13 M1 7 H13" stroke="#222" stroke-width="1.7" fill="none"/></svg></div><div class="ul" style="margin-top:0px"></div>
</div>
<div class="card" style="left:1397.0px;top:526.0px;height:199.7px;width:455px">
<div class="t" style="letter-spacing:-0.17px">Graphic Designer</div><div class="d" style="letter-spacing:0.32px">8/28/2024</div><div class="av" style="margin-top:0.8px"><svg width="20" height="20" viewBox="0 0 20 20" style="position:absolute;left:0;top:0;"><circle cx="10" cy="5.7" r="4.25" fill="#d3d3d7"/><path d="M1.3 18.4 V16.2 Q1.3 11.7 10 11.7 Q18.7 11.7 18.7 16.2 V18.4 Z" fill="#d3d3d7"/></svg></div><div class="nm" style="margin-top:0.8px;letter-spacing:-0.03px">Prem Sheth</div>
<div class="b1" style="margin-top:0.6px">Show more</div><div class="b2" style="margin-top:0.6px">Delete</div>
<div class="al" style="margin-top:0px">Add Labels</div><div class="dd" style="margin-top:0px"><svg width="35" height="35" viewBox="0 0 35 35" style="position:absolute;left:0;top:0;"><path d="M11.8 15.4 H23.4 L17.6 21.2 Z" fill="#757575"/></svg></div><div class="pl" style="margin-top:0px"><svg width="14" height="14" viewBox="0 0 14 14" style="position:absolute;left:0;top:0;"><path d="M7 1 V13 M1 7 H13" stroke="#222" stroke-width="1.7" fill="none"/></svg></div><div class="ul" style="margin-top:0px"></div>
</div>
<div class="card" style="left:1.0px;top:736.0px;height:199.0px;width:455px">
<div class="t" style="letter-spacing:-0.17px">Graphic Designer</div><div class="d" style="letter-spacing:0.32px">8/28/2024</div><div class="av" style="margin-top:0.8px"><svg width="20" height="20" viewBox="0 0 20 20" style="position:absolute;left:0;top:0;"><circle cx="10" cy="5.7" r="4.25" fill="#d3d3d7"/><path d="M1.3 18.4 V16.2 Q1.3 11.7 10 11.7 Q18.7 11.7 18.7 16.2 V18.4 Z" fill="#d3d3d7"/></svg></div><div class="nm" style="margin-top:1.7px;letter-spacing:0.05px">Neetu Kumari</div>
<div class="b1" style="margin-top:1px">Show more</div><div class="b2" style="margin-top:1px">Delete</div>
<div class="al" style="margin-top:0px">Add Labels</div><div class="dd" style="margin-top:0px"><svg width="35" height="35" viewBox="0 0 35 35" style="position:absolute;left:0;top:0;"><path d="M11.8 15.4 H23.4 L17.6 21.2 Z" fill="#757575"/></svg></div><div class="pl" style="margin-top:0px"><svg width="14" height="14" viewBox="0 0 14 14" style="position:absolute;left:0;top:0;"><path d="M7 1 V13 M1 7 H13" stroke="#222" stroke-width="1.7" fill="none"/></svg></div><div class="ul" style="margin-top:0px"></div>
</div>
<div class="card" style="left:466.0px;top:736.0px;height:199.0px;width:456px">
<div class="t" style="letter-spacing:-0.17px">Graphic Designer</div><div class="d" style="letter-spacing:0.32px">8/28/2024</div><div class="av" style="margin-top:0.8px"><svg width="20" height="20" viewBox="0 0 20 20" style="position:absolute;left:0;top:0;"><circle cx="10" cy="5.7" r="4.25" fill="#d3d3d7"/><path d="M1.3 18.4 V16.2 Q1.3 11.7 10 11.7 Q18.7 11.7 18.7 16.2 V18.4 Z" fill="#d3d3d7"/></svg></div><div class="nm" style="margin-top:1.7px;letter-spacing:-0.03px">Shailly Gupta</div>
<div class="b1" style="margin-top:1px">Show more</div><div class="b2" style="margin-top:1px">Delete</div>
<div class="al" style="margin-top:0px">Add Labels</div><div class="dd" style="margin-top:0px"><svg width="35" height="35" viewBox="0 0 35 35" style="position:absolute;left:0;top:0;"><path d="M11.8 15.4 H23.4 L17.6 21.2 Z" fill="#757575"/></svg></div><div class="pl" style="margin-top:0px"><svg width="14" height="14" viewBox="0 0 14 14" style="position:absolute;left:0;top:0;"><path d="M7 1 V13 M1 7 H13" stroke="#222" stroke-width="1.7" fill="none"/></svg></div><div class="ul" style="margin-top:0px"></div>
</div>
<div class="card" style="left:932.0px;top:736.0px;height:199.0px;width:455px">
<div class="t" style="letter-spacing:-0.17px">Graphic Designer</div><div class="d" style="letter-spacing:0.32px">8/28/2024</div><div class="av" style="margin-top:0.8px"><svg width="20" height="20" viewBox="0 0 20 20" style="position:absolute;left:0;top:0;"><circle cx="10" cy="5.7" r="4.25" fill="#d3d3d7"/><path d="M1.3 18.4 V16.2 Q1.3 11.7 10 11.7 Q18.7 11.7 18.7 16.2 V18.4 Z" fill="#d3d3d7"/></svg></div><div class="nm" style="margin-top:1.7px;letter-spacing:0.33px">amit bisht</div>
<div class="b1" style="margin-top:1px">Show more</div><div class="b2" style="margin-top:1px">Delete</div>
<div class="al" style="margin-top:0px">Add Labels</div><div class="dd" style="margin-top:0px"><svg width="35" height="35" viewBox="0 0 35 35" style="position:absolute;left:0;top:0;"><path d="M11.8 15.4 H23.4 L17.6 21.2 Z" fill="#757575"/></svg></div><div class="pl" style="margin-top:0px"><svg width="14" height="14" viewBox="0 0 14 14" style="position:absolute;left:0;top:0;"><path d="M7 1 V13 M1 7 H13" stroke="#222" stroke-width="1.7" fill="none"/></svg></div><div class="ul" style="margin-top:0px"></div>
</div>
<div class="card" style="left:1397.0px;top:736.0px;height:199.0px;width:455px">
<div class="t" style="letter-spacing:-0.17px">Graphic Designer</div><div class="d" style="letter-spacing:0.32px">8/28/2024</div><div class="av" style="margin-top:0.8px"><svg width="20" height="20" viewBox="0 0 20 20" style="position:absolute;left:0;top:0;"><circle cx="10" cy="5.7" r="4.25" fill="#d3d3d7"/><path d="M1.3 18.4 V16.2 Q1.3 11.7 10 11.7 Q18.7 11.7 18.7 16.2 V18.4 Z" fill="#d3d3d7"/></svg></div><div class="nm" style="margin-top:1.7px;letter-spacing:0.09px">Rohan Mantri</div>
<div class="b1" style="margin-top:1px">Show more</div><div class="b2" style="margin-top:1px">Delete</div>
<div class="al" style="margin-top:0px">Add Labels</div><div class="dd" style="margin-top:0px"><svg width="35" height="35" viewBox="0 0 35 35" style="position:absolute;left:0;top:0;"><path d="M11.8 15.4 H23.4 L17.6 21.2 Z" fill="#757575"/></svg></div><div class="pl" style="margin-top:0px"><svg width="14" height="14" viewBox="0 0 14 14" style="position:absolute;left:0;top:0;"><path d="M7 1 V13 M1 7 H13" stroke="#222" stroke-width="1.7" fill="none"/></svg></div><div class="ul" style="margin-top:0px"></div>
</div>
</div>
<div class="abs" style="left:1982.4px;top:78px;width:6.5px;height:933px;border-radius:3.5px;background:#e7e3e3"></div>
<svg width="58" height="450" viewBox="1990 85 58 450" style="position:absolute;left:1990px;top:85px"><ellipse cx="2019" cy="113.9" rx="22.1" ry="21.2" fill="#fff"/><ellipse cx="2019" cy="164.6" rx="22.1" ry="21.5" fill="#fff"/><ellipse cx="2019" cy="217.0" rx="22.1" ry="23.0" fill="#fff"/><ellipse cx="2019" cy="271.7" rx="22.1" ry="24.0" fill="#fff"/><ellipse cx="2019" cy="326.0" rx="22.1" ry="21.7" fill="#fff"/><ellipse cx="2019" cy="378.6" rx="22.1" ry="22.6" fill="#fff"/><ellipse cx="2019" cy="433.0" rx="22.1" ry="22.0" fill="#fff"/><ellipse cx="2019.4" cy="498.3" rx="22.5" ry="22.7" fill="#fff"/><rect x="2007.00" y="107.25" width="3.60" height="17.75" rx="1.80" fill="#1f55c4"/><rect x="2012.25" y="103.10" width="3.75" height="17.50" rx="1.88" fill="#2468f2"/><rect x="2017.25" y="107.25" width="3.75" height="17.75" rx="1.88" fill="#3d7ff0"/><rect x="2022.25" y="103.10" width="3.85" height="17.50" rx="1.92" fill="#6b9bff"/><rect x="2027.50" y="107.25" width="3.75" height="17.75" rx="1.88" fill="#a9c5ff"/><path d="M2007 157.8 L2021.4 153.4 V168.9 L2007 168.2 Z" fill="#5b8ff9"/><path d="M2010.6 160.2 L2020.8 157.4 V164.4 L2010.6 165 Z" fill="#fff"/><path d="M2010.6 165 L2020.8 164.4 V168.9 L2007.6 168.2 Z" fill="#a9c5ff"/><path d="M2020.4 153.6 L2023.9 152.8 L2025 169.6 L2021.4 170.1 Z" fill="#1f55c4"/><path d="M2011.2 169 L2015 169.2 L2016.3 174.4 L2012.8 175.7 Z" fill="#1f55c4"/><path d="M2025.6 157.5 L2029.4 154.1 M2026.5 160.6 L2031 160 M2026.2 165 L2030.2 167.5" stroke="#a9c5ff" stroke-width="0.6" fill="none"/><rect x="2007" y="204" width="24" height="22" rx="2.6" fill="#3d7ff0"/><path d="M2007 206.6 L2013.1 210 V226 H2009.6 Q2007 226 2007 223.4 Z" fill="#1f55c4"/><path d="M2031 206.6 L2025.6 210 V226 H2028.4 Q2031 226 2031 223.4 Z" fill="#6b9bff"/><path d="M2013.1 220.6 H2025.6 L2029.8 222 Q2030.4 226 2028.4 226 H2013.1 Z" fill="#a9c5ff"/><rect x="2013.1" y="210" width="12.5" height="10.6" fill="#fff"/><circle cx="2016.3" cy="215.4" r="1.25" fill="#1f55c4"/><circle cx="2021.6" cy="215.4" r="1.25" fill="#1f55c4"/><path d="M2013.1 226 H2027.6 V230 Z" fill="#2468f2"/><path d="M2024.6 261 Q2013 273.6 2009.6 278.4 Q2006.6 283.2 2011 283 Q2016.4 282.2 2021.4 277.8" fill="none" stroke="#3d7ff0" stroke-width="3.1" stroke-linecap="round"/><path d="M2021.4 277.8 Q2023.8 276.6 2023.6 279.4 Q2023.6 281.6 2026 281 Q2028.6 280.4 2030.4 279.2" fill="none" stroke="#a9c5ff" stroke-width="2.7" stroke-linecap="round"/><path d="M2021 260.2 L2027.4 257.7 L2026.4 264.2 Z" fill="#1f55c4" stroke="#1f55c4" stroke-width="0.8" stroke-linejoin="round"/><rect x="2007.00" y="314.00" width="15.25" height="6.60" rx="3.30" fill="#6b9bff"/><rect x="2007.00" y="322.50" width="15.25" height="6.60" rx="3.30" fill="#2468f2"/><rect x="2007.00" y="331.20" width="15.25" height="6.60" rx="3.30" fill="#1f55c4"/><circle cx="2027.5" cy="317.3" r="3.5" fill="#1f55c4"/><rect x="2024.10" y="322.70" width="6.90" height="15.10" rx="3.45" fill="#a9c5ff"/><circle cx="2011.5" cy="370" r="4.6" fill="#a9c5ff"/><circle cx="2026.6" cy="370" r="4.6" fill="#3d7ff0"/><path d="M2007.5 384.6 V380.5 A4.05 4.05 0 0 1 2015.6 380.5 V384.6 Z" fill="#1f55c4"/><path d="M2007.5 384.4 H2015.6 V388.7 A4.05 4.05 0 0 1 2007.5 388.7 Z" fill="#3d7ff0"/><path d="M2022.8 384.6 V380.5 A4.1 4.1 0 0 1 2031 380.5 V384.6 Z" fill="#a9c5ff"/><path d="M2022.8 384.4 H2031 V388.7 A4.1 4.1 0 0 1 2022.8 388.7 Z" fill="#1f55c4"/><path d="M2013.4 378.9 L2017.6 382.3" stroke="#a9c5ff" stroke-width="2.7" stroke-linecap="round"/><path d="M2025.4 378.9 L2021.4 382.1" stroke="#3d7ff0" stroke-width="2.9" stroke-linecap="round"/><rect x="2007.00" y="421.25" width="7.00" height="23.75" rx="3.50" fill="#1f55c4"/><rect x="2015.40" y="425.60" width="7.10" height="19.40" rx="3.55" fill="#2468f2"/><rect x="2024.00" y="429.40" width="7.00" height="15.60" rx="3.50" fill="#6b9bff"/><circle cx="2027.3" cy="424.8" r="3.8" fill="#a9c5ff"/><path d="M2025.2 424.6 L2026.8 426.2 L2029.6 423" stroke="#1f55c4" stroke-width="1.1" fill="none"/><rect x="2001.2" y="464.9" width="36" height="0.8" fill="#dcdcdc"/><path d="M2010 503.75 L2022.75 491 L2026.9 495.1 L2014.1 507.8 H2010 Z" fill="#757575"/><path d="M2023.8 490.2 L2025.7 488.6 L2029.5 492.4 L2027.8 494.2 Z" fill="#757575"/></svg>
<div class="abs" style="left:2009px;top:1070px;width:60px;height:39px;border:1px solid #2f3744;border-radius:20px"><svg width="40" height="38" viewBox="0 0 40 38" style="position:absolute;left:0;top:0;"><path d="M15.8 13.4 L22.2 19.4 L15.8 25.2" fill="none" stroke="#262626" stroke-width="1.9"/></svg></div>
</body></html>
